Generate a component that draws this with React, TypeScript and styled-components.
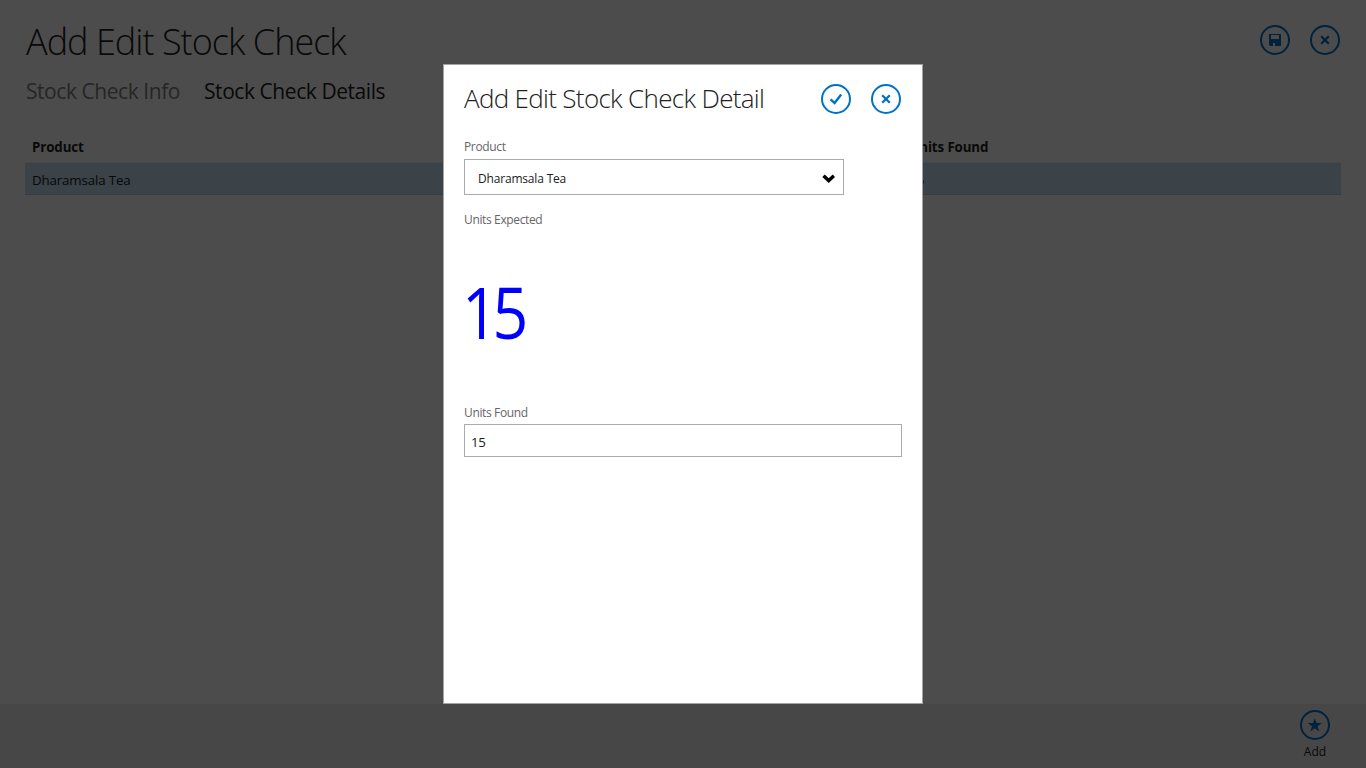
import React from "react";
import styled, { createGlobalStyle } from "styled-components";

const GlobalStyle = createGlobalStyle`
  * { box-sizing: border-box; }
  body {
    margin: 0;
    overflow: hidden;
    background: #fff;
    font-family: "Open Sans", "Noto Sans", sans-serif;
    color: #212121;
  }
`;

const Page = styled.div`
  display: flex;
  flex-direction: column;
  width: 1366px;
  height: 768px;
`;

const Header = styled.header`
  display: flex;
  justify-content: space-between;
  align-items: flex-start;
  height: 76px;
  padding: 16px 26px 0;
`;

const Title = styled.h1<{ $size: number; $line: number; $spacing: number }>`
  margin: 0;
  font-size: ${(p) => p.$size}px;
  line-height: ${(p) => p.$line}px;
  letter-spacing: ${(p) => p.$spacing}px;
  font-weight: 300;
  white-space: nowrap;
`;

const Actions = styled.div<{ $top: number }>`
  display: flex;
  gap: 20px;
  padding-top: ${(p) => p.$top}px;
`;

const RoundButton = styled.button`
  display: flex;
  align-items: center;
  justify-content: center;
  width: 30px;
  height: 30px;
  padding: 0;
  border: 2px solid #0072c6;
  border-radius: 50%;
  background: transparent;
  color: #0072c6;
  svg { display: block; }
`;

const Tabs = styled.nav`
  display: flex;
  gap: 24px;
  height: 55px;
  padding-left: 26px;
`;

const Tab = styled.span<{ $active?: boolean }>`
  font-size: 21px;
  line-height: 31px;
  letter-spacing: -0.44px;
  color: ${(p) => (p.$active ? "#212121" : "#808080")};
`;

const Table = styled.div`
  flex: 1;
  padding: 0 25px;
`;

const Row = styled.div<{ $head?: boolean }>`
  display: grid;
  grid-template-columns: repeat(3, 1fr);
  height: 32px;
  line-height: ${(p) => (p.$head ? 32 : 34)}px;
  font-size: 13.33px;
  font-weight: ${(p) => (p.$head ? 700 : 400)};
  letter-spacing: ${(p) => (p.$head ? -0.12 : -0.15)}px;
  background: ${(p) => (p.$head ? "transparent" : "#c5dcf0")};
  border-bottom: 1px solid ${(p) => (p.$head ? "#f0f0f0" : "#b4c8da")};
`;

const Cell = styled.div`
  padding-left: 7px;
`;

const Footer = styled.footer`
  display: flex;
  justify-content: flex-end;
  height: 64px;
  padding: 6px 36px 0;
  background: #eeeeee;
`;

const Command = styled.div`
  display: flex;
  flex-direction: column;
  align-items: center;
  gap: 3px;
  width: 30px;
  font-size: 12px;
  line-height: 18px;
`;

const Overlay = styled.div`
  position: absolute;
  top: 0;
  left: 0;
  display: flex;
  align-items: center;
  justify-content: center;
  width: 1366px;
  height: 768px;
  background: rgba(0, 0, 0, 0.7);
`;

const Dialog = styled.section`
  display: flex;
  flex-direction: column;
  width: 480px;
  height: 640px;
  padding: 0 20px;
  border: 1px solid #a3a3a3;
  background: #fff;
`;

const DialogHeader = styled.div`
  display: flex;
  justify-content: space-between;
  height: 73px;
  padding: 15px 1px 0 0;
`;

const Label = styled.label<{ $height?: number }>`
  height: ${(p) => p.$height ?? 21}px;
  font-size: 12px;
  line-height: 18px;
  letter-spacing: -0.36px;
  color: #666;
`;

const Select = styled.div`
  display: flex;
  align-items: center;
  justify-content: space-between;
  width: 380px;
  height: 36px;
  margin-bottom: 16px;
  padding: 2px 8px 0 13px;
  border: 1px solid #ababab;
  font-size: 12px;
  letter-spacing: -0.18px;
`;

const BigValue = styled.div`
  height: 172px;
  margin-left: -2px;
  font-size: 72px;
  line-height: 158px;
  letter-spacing: -6px;
  font-weight: 400;
  color: #0000ff;
  transform: scaleX(0.87);
  transform-origin: left;
`;

const Input = styled.div`
  width: 438px;
  height: 33px;
  padding-left: 6px;
  border: 1px solid #ababab;
  font-size: 13.33px;
  line-height: 34px;
  letter-spacing: -0.3px;
`;

const CrossIcon = () => (
  <svg width="10" height="10" viewBox="0 0 10 10" fill="none" stroke="currentColor" strokeWidth="2.3">
    <path d="M1.2 1.2L8.8 8.8M8.8 1.2L1.2 8.8" />
  </svg>
);

const CheckIcon = () => (
  <svg width="14" height="12" viewBox="0 0 14 12" fill="none" stroke="currentColor" strokeWidth="2.4">
    <path d="M1.6 6.4L5.6 10.1L12.2 1.6" />
  </svg>
);

const SaveIcon = () => (
  <svg width="12" height="12" viewBox="0 0 12 12" fill="currentColor">
    <path fillRule="evenodd" d="M0 0H12V12H1L0 11ZM2 1V5H10V1ZM4 9V12H6V9Z" />
  </svg>
);

const StarIcon = () => (
  <svg width="14" height="14" viewBox="0 0 14 14" fill="currentColor">
    <path d="M6.8 0L8.5 5H13.8L9.6 8.3L11.2 13.4L6.8 10.3L2.4 13.4L4 8.3L-0.2 5H5.1Z" />
  </svg>
);

const ChevronIcon = () => (
  <svg width="13" height="9" viewBox="0 0 13 9" fill="none" stroke="#000" strokeWidth="3.4">
    <path d="M1.5 1.8L6.7 6.6L11.9 1.8" />
  </svg>
);

export default function App() {
  return (
    <>
      <GlobalStyle />
      <Page>
        <Header>
          <Title $size={36} $line={52} $spacing={-0.97}>Add Edit Stock Check</Title>
          <Actions $top={9}>
            <RoundButton aria-label="Save"><SaveIcon /></RoundButton>
            <RoundButton aria-label="Close"><CrossIcon /></RoundButton>
          </Actions>
        </Header>
        <Tabs>
          <Tab>Stock Check Info</Tab>
          <Tab $active>Stock Check Details</Tab>
        </Tabs>
        <Table>
          <Row $head>
            <Cell>Product</Cell>
            <Cell>Units Expected</Cell>
            <Cell>Units Found</Cell>
          </Row>
          <Row>
            <Cell>Dharamsala Tea</Cell>
            <Cell>15</Cell>
            <Cell>15</Cell>
          </Row>
        </Table>
        <Footer>
          <Command>
            <RoundButton aria-label="Add"><StarIcon /></RoundButton>
            <span>Add</span>
          </Command>
        </Footer>
      </Page>
      <Overlay>
        <Dialog>
          <DialogHeader>
            <Title $size={26} $line={37} $spacing={-0.68}>Add Edit Stock Check Detail</Title>
            <Actions $top={4}>
              <RoundButton aria-label="Confirm"><CheckIcon /></RoundButton>
              <RoundButton aria-label="Cancel"><CrossIcon /></RoundButton>
            </Actions>
          </DialogHeader>
          <Label>Product</Label>
          <Select>
            Dharamsala Tea
            <ChevronIcon />
          </Select>
          <Label>Units Expected</Label>
          <BigValue>15</BigValue>
          <Label $height={20}>Units Found</Label>
          <Input>15</Input>
        </Dialog>
      </Overlay>
    </>
  );
}
